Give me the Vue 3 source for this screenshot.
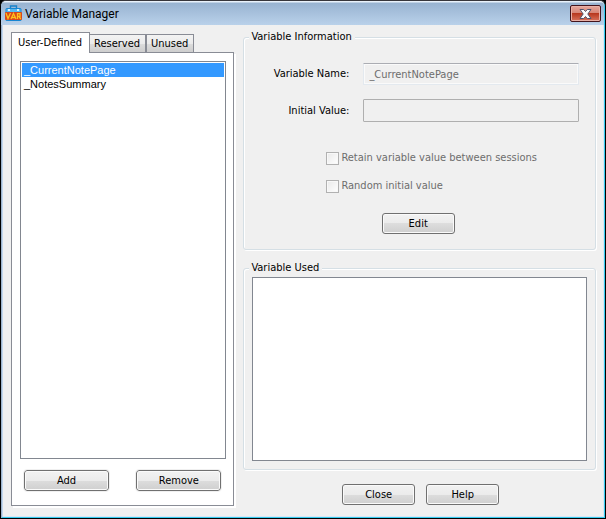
<script setup>
import { ref } from 'vue'

const tabs = ['User-Defined', 'Reserved', 'Unused']
const activeTab = ref('User-Defined')
const variables = ['_CurrentNotePage', '_NotesSummary']
const selected = ref('_CurrentNotePage')
</script>

<template>
  <main class="window">
    <header class="titlebar">
      <svg class="logo" width="17" height="17" viewBox="0 0 17 17" aria-hidden="true">
        <path d="M5.500 4V1h6v3" fill="none" stroke="#1683cc" stroke-width="1.4" />
        <rect x="0.500" y="3" width="16" height="13" rx="1.5" fill="#1686d2" />
        <rect x="1.500" y="4" width="14" height="3" fill="#58b8ee" />
        <rect x="3" y="4" width="2" height="2" fill="#d8f1ff" />
        <rect x="12" y="4" width="2" height="2" fill="#d8f1ff" />
        <rect x="0" y="7" width="17" height="8" rx="1" fill="#d8471c" />
        <path d="M1 8l2 5.500L5.500 8M6 14l2.500-5.500L11 14M7 12.500h3M12.500 14V8.700h2.500v2.600h-2.500M14 11.500l1.800 2.500" fill="none" stroke="#ffc21c" stroke-width="1.3" />
      </svg>
      <h1>Variable Manager</h1>
      <button class="close" type="button" aria-label="Close window">
        <svg width="13" height="10" viewBox="0 0 13 10" aria-hidden="true">
          <path d="M1 .5h3.700L6.500 2.500 8.300.5H12L8.800 5l3.200 4.500H8.300L6.500 7.500 4.700 9.500H1L4.200 5z" fill="#fbfbfc" stroke="#50536b" stroke-width="1" />
        </svg>
      </button>
    </header>

    <div class="content">
      <section class="left">
        <div class="tabs" role="tablist">
          <button
            v-for="tab in tabs"
            :key="tab"
            type="button"
            role="tab"
            class="tab"
            :class="{ active: tab === activeTab }"
            :aria-selected="tab === activeTab"
            @click="activeTab = tab"
          >{{ tab }}</button>
        </div>
        <div class="panel">
          <ul class="list" role="listbox">
            <li
              v-for="name in variables"
              :key="name"
              role="option"
              :class="{ selected: name === selected }"
              :aria-selected="name === selected"
              @click="selected = name"
            >{{ name }}</li>
          </ul>
          <div class="panel-actions">
            <button class="btn wide" type="button">Add</button>
            <button class="btn wide" type="button">Remove</button>
          </div>
        </div>
      </section>

      <section class="right">
        <fieldset class="info">
          <legend>Variable Information</legend>
          <div class="field">
            <label for="var-name">Variable Name:</label>
            <input id="var-name" class="text" type="text" :value="selected" disabled />
          </div>
          <div class="field">
            <label for="var-value">Initial Value:</label>
            <input id="var-value" class="text strong" type="text" value="" disabled />
          </div>
          <div class="checks">
            <label><input type="checkbox" disabled />Retain variable value between sessions</label>
            <label><input type="checkbox" disabled />Random initial value</label>
          </div>
          <div class="edit-row">
            <button class="btn" type="button">Edit</button>
          </div>
        </fieldset>

        <fieldset class="used">
          <legend>Variable Used</legend>
          <div class="used-list"></div>
        </fieldset>

        <div class="footer">
          <button class="btn" type="button">Close</button>
          <button class="btn" type="button">Help</button>
        </div>
      </section>
    </div>
  </main>
</template>

<style>
body {
  background: #000;
}
</style>

<style scoped>
.window,
.window * {
  box-sizing: border-box;
}
.window {
  display: flex;
  flex-direction: column;
  min-height: 100vh;
  border: 1px solid #000;
  border-top-color: #37363b;
  background: #f0f0f0;
  border-radius: 6px 6px 0 0;
  box-shadow: inset 1px 0 #9db4cc, inset -1px -1px #35cbef, inset 2px 0 #c4d8ee, inset -2px -2px #dbe7f3;
  font: 11px/14px "DejaVu Sans Condensed", "Noto Sans", sans-serif;
  color: #000;
}
.titlebar {
  display: flex;
  align-items: center;
  height: 24px;
  margin-right: 1px;
  padding: 0 3px 0 4px;
  background: linear-gradient(#e9f1fa 0, #e9f1fa 1px, #98b3d1 2px, #b9d1ea 100%);
  border-radius: 5px 5px 0 0;
}
.logo {
  margin-right: 3px;
}
h1 {
  flex: 1;
  margin: 0;
  padding-top: 1px;
  font: 12px/16px Roboto, sans-serif;
}
.close {
  display: flex;
  align-items: center;
  justify-content: center;
  width: 31px;
  height: 17px;
  margin-top: 1px;
  padding: 0;
  border: 1px solid #43141c;
  border-radius: 2px;
  background: linear-gradient(#e6a79d 0, #d68475 48%, #b8381f 50%, #d8735d 100%);
  box-shadow: inset 0 0 0 1px #e9b0a6;
}
.content {
  flex: 1;
  display: flex;
  gap: 9px;
  padding: 7px 9px 12px 10px;
}
.left {
  flex: 223 1 0;
  display: flex;
  flex-direction: column;
}
.tabs {
  display: flex;
  align-items: flex-end;
  height: 21px;
}
.tab {
  height: 18px;
  margin: 0 0 1px;
  padding: 0 5px 0 4px;
  border: 1px solid #898c95;
  border-bottom: 0;
  background: linear-gradient(#f3f3f3 0, #ebebeb 50%, #dddddd 50%, #cecece 100%);
  font: inherit;
  white-space: nowrap;
}
.tab.active {
  position: relative;
  height: 21px;
  margin: 0 -1px 0 0;
  padding: 0 7px 1px 6px;
  background: #fff;
}
.panel {
  flex: 1;
  display: flex;
  flex-direction: column;
  margin-top: -1px;
  padding: 8px 7px 14px 8px;
  border: 1px solid #898c95;
  background: #fff;
  box-shadow: 2px 2px #fff;
}
.list {
  flex: 1;
  margin: 0;
  padding: 1px;
  border: 1px solid #828790;
  list-style: none;
  font: 11px/14px "Liberation Sans", Arial, sans-serif;
}
.list li {
  padding-left: 2px;
}
.list .selected {
  background: #3399ff;
  color: #fff;
}
.panel-actions {
  display: flex;
  justify-content: space-between;
  margin-top: 11px;
  padding: 0 5px 0 4px;
}
.btn {
  width: 73px;
  height: 21px;
  padding: 0;
  border: 1px solid #707070;
  border-radius: 3px;
  background: linear-gradient(#f2f2f2 0, #ebebeb 50%, #dddddd 50%, #cfcfcf 100%);
  box-shadow: inset 0 0 0 1px #fafafa;
  font: inherit;
}
.btn.wide {
  width: 85px;
  outline: 1px solid #f0f0f0;
}
.right {
  flex: 352 1 0;
  display: flex;
  flex-direction: column;
  min-width: 0;
  padding-bottom: 1px;
}
fieldset {
  min-width: 0;
  margin: 0;
  border: 1px solid #d5dfe5;
  border-radius: 3px;
  box-shadow: inset 1px 1px #fff, 1px 1px #fff;
}
legend {
  padding: 0 3px 0 2px;
  background: #f0f0f0;
}
.info {
  display: flex;
  flex-direction: column;
  margin: -2px 0 11px;
  padding: 19px 16px 15px 5px;
}
.field {
  display: flex;
  align-items: center;
  gap: 14px;
  margin-bottom: 14px;
}
.field label {
  width: 100px;
  text-align: right;
}
.text {
  flex: 1;
  min-width: 0;
  height: 22px;
  padding: 0 5px;
  border: 1px solid #e3e9ef;
  border-top-color: #abadb3;
  border-radius: 1px;
  background: #f0f0f0;
  box-shadow: inset 0 0 0 1px #fafafa;
  font: inherit;
  color: #6d6d6d;
}
.text.strong {
  height: 23px;
  border-color: #afafaf;
  box-shadow: none;
}
.checks {
  display: flex;
  flex-direction: column;
  gap: 14px;
  padding: 15px 0 0 77px;
  color: #6d6d6d;
}
.checks label {
  display: flex;
  align-items: center;
  gap: 2px;
}
.checks input {
  appearance: none;
  width: 13px;
  height: 13px;
  margin: 0;
  border: 1px solid #b1b1b1;
  background: linear-gradient(135deg, #e9e9e9, #fff);
  box-shadow: inset 0 0 0 1px #f8f8f8;
}
.edit-row {
  display: flex;
  justify-content: center;
  margin-top: 20px;
  padding-left: 8px;
}
.used {
  flex: 1;
  display: flex;
  flex-direction: column;
  padding: 2px 8px 8px;
}
.used legend {
  margin-left: -3px;
}
.used-list {
  flex: 1;
  border: 1px solid #828790;
  background: #fff;
}
.footer {
  display: flex;
  justify-content: center;
  gap: 11px;
  margin-top: 14px;
  padding-left: 2px;
}
</style>
